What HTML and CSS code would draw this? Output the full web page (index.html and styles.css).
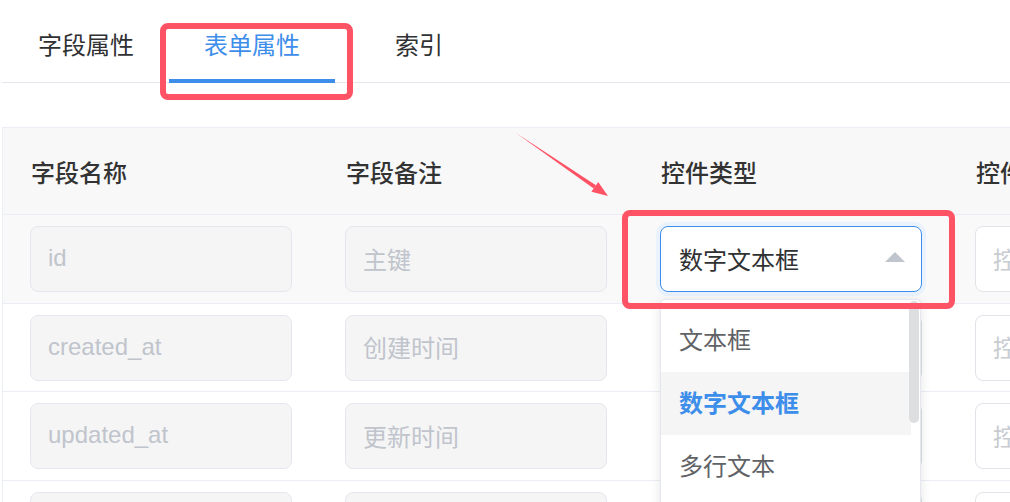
FILE: index.html
```html
<!DOCTYPE html>
<html lang="zh-CN">
<head>
<meta charset="utf-8">
<title>表单属性</title>
<link rel="stylesheet" href="styles.css">
</head>
<body>
<div class="page">
  <div class="tabs">
    <div class="tab tab-first">字段属性</div>
    <div class="tab tab-active">表单属性</div>
    <div class="tab tab-last">索引</div>
  </div>

  <div class="table">
    <div class="cell th">字段名称</div>
    <div class="cell th">字段备注</div>
    <div class="cell th">控件类型</div>
    <div class="cell th">控件名称</div>

    <div class="cell row-hover"><div class="input disabled">id</div></div>
    <div class="cell row-hover"><div class="input disabled">主键</div></div>
    <div class="cell row-hover">
      <div class="input select focus">
        <span class="select-value">数字文本框</span>
        <svg class="caret" width="20" height="10" viewBox="0 0 20 10"><polygon points="0,10 10,0 20,10" fill="#c0c4cc"/></svg>
      </div>
    </div>
    <div class="cell row-hover"><div class="input plain placeholder">控件名称</div></div>

    <div class="cell r88"><div class="input disabled">created_at</div></div>
    <div class="cell r88"><div class="input disabled">创建时间</div></div>
    <div class="cell r88"><div class="input select"></div></div>
    <div class="cell r88"><div class="input plain placeholder">控件名称</div></div>

    <div class="cell"><div class="input disabled">updated_at</div></div>
    <div class="cell"><div class="input disabled">更新时间</div></div>
    <div class="cell"><div class="input select"></div></div>
    <div class="cell"><div class="input plain placeholder">控件名称</div></div>

    <div class="cell"><div class="input disabled"></div></div>
    <div class="cell"><div class="input disabled"></div></div>
    <div class="cell"><div class="input select"></div></div>
    <div class="cell"><div class="input plain"></div></div>
  </div>

  <div class="dropdown">
    <ul class="options">
      <li class="option">文本框</li>
      <li class="option option-hover">数字文本框</li>
      <li class="option">多行文本</li>
    </ul>
    <div class="scrollbar"></div>
  </div>

  <div class="mark mark-tab"></div>
  <div class="mark mark-select"></div>

  <svg class="arrow" width="1010" height="502" viewBox="0 0 1010 502">
    <polygon points="516,133 595.9,185.3 593.7,188.5" fill="#fe5265"/>
    <polygon points="608,196 591.4,191.8 598.2,182" fill="#fe5265"/>
  </svg>
</div>
</body>
</html>
```

FILE: styles.css
```css
* {
  box-sizing: border-box;
}

html, body {
  margin: 0;
  padding: 0;
  background: #ffffff;
}

body {
  font-family: "Liberation Sans", "Noto Sans CJK SC", sans-serif;
  color: #303133;
}

.page {
  position: relative;
  width: 1010px;
  height: 502px;
  overflow: hidden;
}

/* Tabs */
.tabs {
  display: flex;
  height: 83px;
  margin-left: 2px;
  box-shadow: inset 0 -1px 0 #e4e7ed;
}

.tab {
  display: flex;
  align-items: center;
  height: 83px;
  padding: 9px 35px 0 35px;
  font-size: 24px;
  line-height: 32px;
  color: #303133;
  white-space: nowrap;
}

.tab-first {
  padding-left: 36px;
}

.tab-active {
  color: #3d8eea;
  border-bottom: 4px solid #3d8eea;
  padding-top: 13px;
}

.tab-last {
  padding-left: 60px;
}

/* Table */
.table {
  display: grid;
  grid-template-columns: repeat(4, 315px);
  margin-top: 44px;
  margin-left: 2px;
  border-left: 1px solid #ebeef5;
  border-top: 1px solid #ebeef5;
  width: max-content;
}

.cell {
  display: flex;
  align-items: center;
  height: 89px;
  padding-left: 27px;
  border-bottom: 1px solid #ebeef5;
}

.cell.r88 {
  height: 88px;
}

.th {
  height: 87px;
  padding-left: 28px;
  background: #f8f8f8;
  font-size: 24px;
  font-weight: 500;
  color: #333333;
}

.row-hover {
  background: #f9f9f9;
}

.input {
  display: flex;
  align-items: center;
  width: 262px;
  height: 66px;
  padding-left: 17px;
  padding-bottom: 2px;
  border: 1px solid #e4e7ed;
  border-radius: 8px;
  font-size: 24px;
  white-space: nowrap;
  overflow: hidden;
}

.disabled {
  background: #f5f5f5;
  color: #c0c4cc;
}

.plain {
  background: #ffffff;
  border-color: #e0e3e8;
}

.placeholder {
  color: #c8cbd0;
}

.select {
  position: relative;
  background: #ffffff;
  color: #303133;
  border-color: #dcdfe6;
}

.select.focus {
  border-color: #3d8eea;
  box-shadow: 0 0 0 4px #eaf3fd;
  padding-left: 18px;
}

.select-value {
  flex: 1;
}

.caret {
  margin-right: 16px;
  margin-top: -2px;
}

/* Dropdown */
.dropdown {
  position: absolute;
  left: 660px;
  top: 299px;
  width: 261px;
  height: 260px;
  background: #ffffff;
  border: 1px solid #e4e7ed;
  border-radius: 4px;
  box-shadow: 0 2px 12px rgba(0, 0, 0, 0.1);
  padding-top: 9px;
  z-index: 5;
}

.options {
  list-style: none;
  margin: 0;
  padding: 0;
  width: 250px;
}

.option {
  display: flex;
  align-items: center;
  height: 63px;
  padding-left: 18px;
  padding-bottom: 4px;
  font-size: 24px;
  color: #606266;
}

.option-hover {
  background: #f5f5f5;
  color: #3d8eea;
  font-weight: 700;
}

.scrollbar {
  position: absolute;
  right: 1px;
  top: 1px;
  width: 10px;
  height: 122px;
  border-radius: 5px;
  background: #dddee0;
}

/* Annotations */
.mark {
  position: absolute;
  border: 6px solid #fe5265;
  border-radius: 8px;
  z-index: 10;
}

.mark-tab {
  left: 160px;
  top: 23px;
  width: 193px;
  height: 77px;
}

.mark-select {
  left: 622px;
  top: 210px;
  width: 333px;
  height: 99px;
}

.arrow {
  position: absolute;
  left: 0;
  top: 0;
  z-index: 10;
  pointer-events: none;
}
```
